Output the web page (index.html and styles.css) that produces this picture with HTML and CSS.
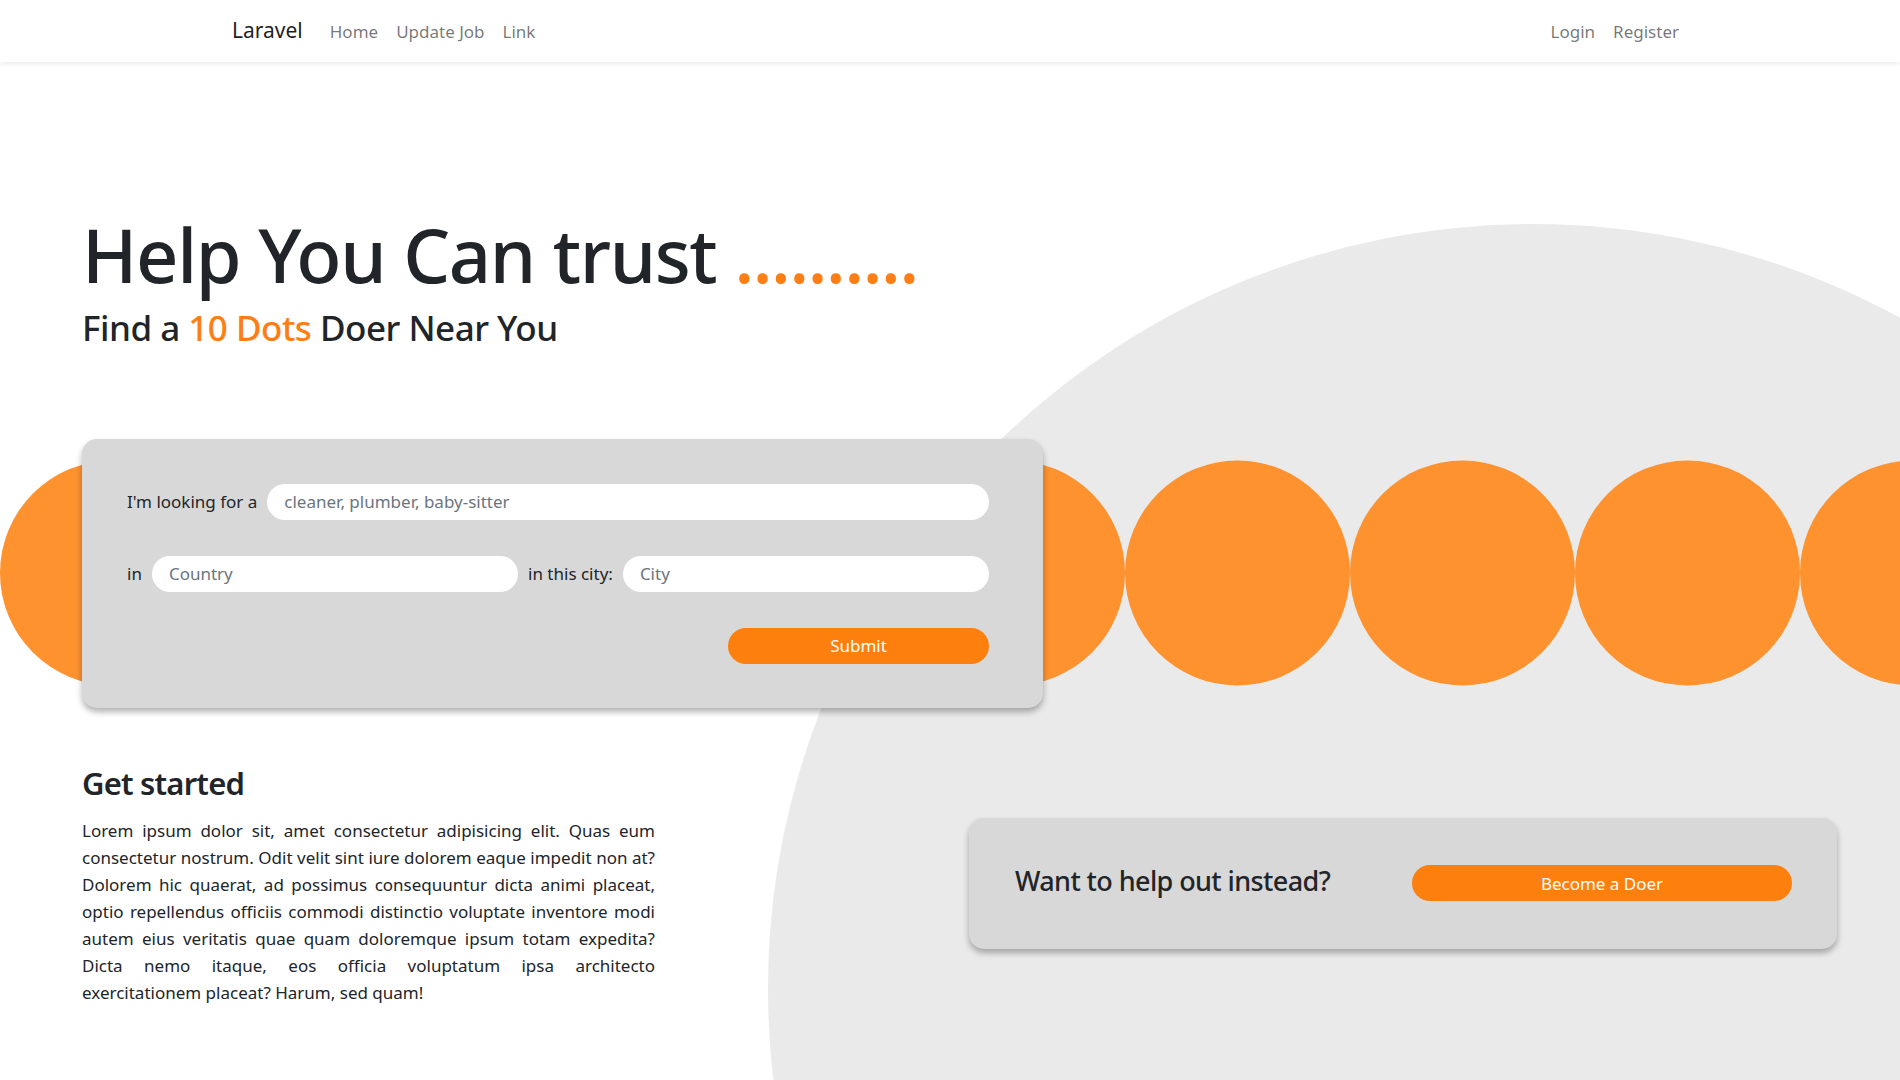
FILE: index.html
```html
<!DOCTYPE html>
<html lang="en">
<head>
<meta charset="utf-8">
<title>Laravel</title>
<link rel="stylesheet" href="styles.css">
</head>
<body>
<nav class="navbar">
  <div class="nav-inner">
    <a class="brand" href="#">Laravel</a>
    <ul class="nav-links">
      <li><a href="#">Home</a></li>
      <li><a href="#">Update Job</a></li>
      <li><a href="#">Link</a></li>
    </ul>
    <ul class="nav-links nav-right">
      <li><a href="#">Login</a></li>
      <li><a href="#">Register</a></li>
    </ul>
  </div>
</nav>
<main class="page">
  <div class="bg-circle"></div>
  <section class="hero">
    <h1 class="headline">Help You Can trust <span class="dots">..........</span></h1>
    <h2 class="subtitle">Find a <span class="accent">10 Dots</span> Doer Near You</h2>
  </section>
  <section class="search-band">
    <div class="dot-strip">
      <span class="dot"></span><span class="dot"></span><span class="dot"></span>
      <span class="dot"></span><span class="dot"></span><span class="dot"></span>
      <span class="dot"></span><span class="dot"></span><span class="dot"></span>
    </div>
    <form class="search-card">
      <div class="form-row">
        <label class="form-label">I'm looking for a</label>
        <input class="pill-input" type="text" placeholder="cleaner, plumber, baby-sitter">
      </div>
      <div class="form-row">
        <label class="form-label">in</label>
        <input class="pill-input" type="text" placeholder="Country">
        <label class="form-label">in this city:</label>
        <input class="pill-input" type="text" placeholder="City">
      </div>
      <div class="form-row form-actions">
        <button class="btn-orange btn-submit" type="button">Submit</button>
      </div>
    </form>
  </section>
  <section class="bottom-row">
    <div class="intro">
      <h3 class="intro-title">Get started</h3>
      <p class="intro-text">Lorem ipsum dolor sit, amet consectetur adipisicing elit. Quas eum consectetur nostrum. Odit velit sint iure dolorem eaque impedit non at? Dolorem hic quaerat, ad possimus consequuntur dicta animi placeat, optio repellendus officiis commodi distinctio voluptate inventore modi autem eius veritatis quae quam doloremque ipsum totam expedita? Dicta nemo itaque, eos officia voluptatum ipsa architecto exercitationem placeat? Harum, sed quam!</p>
    </div>
    <div class="doer-card">
      <h4 class="doer-title">Want to help out instead?</h4>
      <button class="btn-orange btn-doer" type="button">Become a Doer</button>
    </div>
  </section>
</main>
</body>
</html>
```

FILE: styles.css
```css
* { box-sizing: border-box; }

html, body {
  margin: 0;
  padding: 0;
  height: 1080px;
  overflow: hidden;
}

body {
  font-family: "Noto Sans", "Open Sans", sans-serif;
  color: #212529;
  background: #fff;
  font-size: 18px;
}

/* Navbar */
.navbar {
  position: relative;
  z-index: 5;
  height: 62px;
  background: #fff;
  box-shadow: 0 2px 4px rgba(0, 0, 0, 0.075);
}

.nav-inner {
  height: 100%;
  display: flex;
  align-items: center;
  padding: 0 212px 0 232px;
}

.brand {
  font-size: 21px;
  color: rgba(0, 0, 0, 0.9);
  text-decoration: none;
  margin-right: 18px;
  padding-bottom: 2px;
}

.nav-links {
  list-style: none;
  margin: 0;
  padding: 0;
  display: flex;
}

.nav-links a {
  display: block;
  padding: 0 9px;
  font-size: 17px;
  color: rgba(0, 0, 0, 0.55);
  text-decoration: none;
}

.nav-right {
  margin-left: auto;
}

/* Page */
.page {
  position: relative;
  height: 1018px;
  overflow: hidden;
}

.bg-circle {
  position: absolute;
  left: 768px;
  top: 162px;
  width: 1530px;
  height: 1530px;
  border-radius: 50%;
  background: #eaeaea;
}

.hero {
  position: relative;
  padding: 149px 0 0 82px;
}

.headline {
  margin: 0;
  font-size: 74px;
  font-weight: 500;
  line-height: 1.2;
  letter-spacing: -1.35px;
}

.dots {
  color: #fd7e14;
  letter-spacing: -1.8px;
}

.subtitle {
  margin: 7px 0 0;
  font-size: 35px;
  font-weight: 500;
  line-height: 1.2;
  letter-spacing: -0.5px;
}

.accent {
  color: #fd7e14;
}

/* Search band */
.search-band {
  position: relative;
  margin-top: 90px;
  padding-left: 82px;
}

.dot-strip {
  position: absolute;
  left: 0;
  top: 50%;
  transform: translateY(-50%);
  display: flex;
}

.dot {
  flex: 0 0 225px;
  width: 225px;
  height: 225px;
  border-radius: 50%;
  background: #fd922f;
}

.search-card {
  position: relative;
  width: 961px;
  height: 269px;
  background: #d8d8d8;
  border-radius: 15px;
  box-shadow: 0 4px 6px rgba(0, 0, 0, 0.3);
  padding: 45px 54px 45px 45px;
  display: flex;
  flex-direction: column;
  gap: 36px;
}

.form-row {
  display: flex;
  align-items: center;
  gap: 10px;
  height: 36px;
}

.form-label {
  font-size: 17px;
  white-space: nowrap;
  color: #212529;
}

.pill-input {
  flex: 1 1 0;
  min-width: 0;
  height: 36px;
  border: none;
  border-radius: 18px;
  background: #fff;
  padding: 0 17px;
  font-family: inherit;
  font-size: 17px;
  color: #212529;
  outline: none;
}

.pill-input::placeholder {
  color: #6c757d;
}

.form-actions {
  justify-content: flex-end;
}

.btn-orange {
  height: 36px;
  border: none;
  border-radius: 18px;
  background: #fd7f0e;
  color: #fff;
  font-family: inherit;
  font-size: 17px;
  cursor: pointer;
}

.btn-submit {
  width: 261px;
}

/* Bottom row */
.bottom-row {
  position: relative;
  display: flex;
  align-items: flex-start;
  padding: 57px 63px 0 82px;
}

.intro {
  width: 573px;
}

.intro-title {
  margin: 0 0 15px;
  font-size: 31px;
  font-weight: 600;
  line-height: 1.2;
  letter-spacing: -0.8px;
}

.intro-text {
  margin: 0;
  font-size: 17px;
  line-height: 27px;
  text-align: justify;
}

.doer-card {
  margin-left: auto;
  margin-top: 53px;
  width: 868px;
  height: 131px;
  background: #d8d8d8;
  border-radius: 15px;
  box-shadow: 0 4px 6px rgba(0, 0, 0, 0.3);
  padding: 0 45px 4px 46px;
  display: flex;
  align-items: center;
  justify-content: space-between;
}

.doer-title {
  margin: 0;
  font-size: 27px;
  font-weight: 500;
  line-height: 1.2;
  letter-spacing: -0.6px;
}

.btn-doer {
  width: 380px;
  margin-top: 4px;
}
```
